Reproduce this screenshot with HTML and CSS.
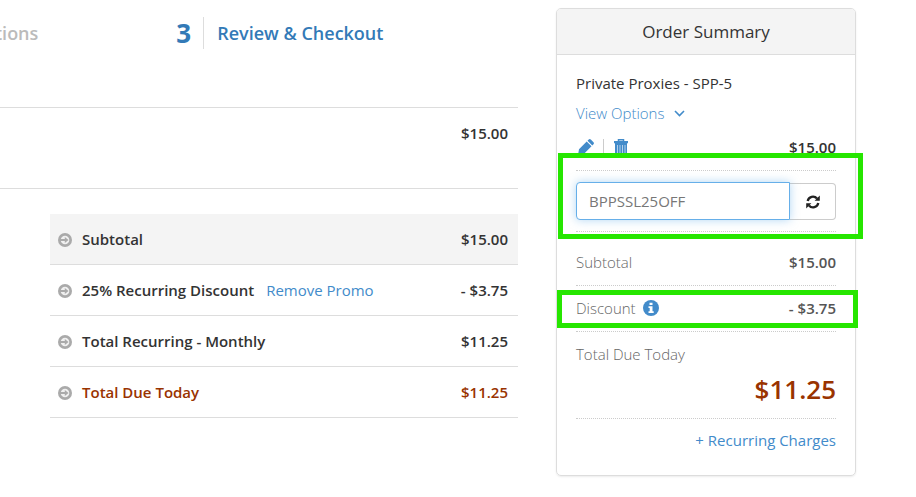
FILE: index.html
```html
<!DOCTYPE html>
<html lang="en">
<head>
<meta charset="utf-8">
<meta name="viewport" content="width=device-width, initial-scale=1">
<title>Review &amp; Checkout</title>
<link rel="stylesheet" href="styles.css">
</head>
<body>
<svg class="sprite" width="0" height="0" aria-hidden="true">
  <symbol id="arrow" viewBox="0 0 14 14">
    <circle cx="7" cy="7" r="7" fill="#aaa"/>
    <circle cx="7" cy="7" r="4.300" fill="#f0f0f0"/>
    <path d="M2 6h4.800V4l3.700 3-3.700 3V8H2z" fill="#aaa"/>
  </symbol>
</svg>
<div class="page">
  <main class="checkout">
    <header class="steps">
      <span class="step-title muted">tions</span>
      <div class="step">
        <span class="step-number">3</span>
        <h1 class="step-title">Review &amp; Checkout</h1>
      </div>
    </header>
    <div class="item">$15.00</div>
    <table class="totals">
      <tbody>
        <tr class="shaded">
          <th scope="row"><svg class="bullet"><use href="#arrow"/></svg>Subtotal</th>
          <td>$15.00</td>
        </tr>
        <tr>
          <th scope="row"><svg class="bullet"><use href="#arrow"/></svg>25% Recurring Discount<a class="remove" href="#">Remove Promo</a></th>
          <td>- $3.75</td>
        </tr>
        <tr>
          <th scope="row"><svg class="bullet"><use href="#arrow"/></svg>Total Recurring - Monthly</th>
          <td>$11.25</td>
        </tr>
        <tr class="due">
          <th scope="row"><svg class="bullet"><use href="#arrow"/></svg>Total Due Today</th>
          <td>$11.25</td>
        </tr>
      </tbody>
    </table>
  </main>

  <aside class="summary">
    <h2 class="summary-title">Order Summary</h2>
    <div class="summary-body">
      <section class="product">
        <div class="product-name">Private Proxies - SPP-5</div>
        <a class="options" href="#">View Options
          <svg width="11" height="7" viewBox="0 0 11 7"><path d="M1 1l4.500 4.500L10 1" fill="none" stroke="currentColor" stroke-width="1.600"/></svg>
        </a>
        <div class="line">
          <div class="actions">
            <button class="icon-button" type="button" aria-label="Edit">
              <svg width="16" height="16" viewBox="0 0 16 16" fill="currentColor"><path d="M0 16l1-5.800L8.700 2.500l4.800 4.800-7.700 7.700zM9.500 1.700L10.700.5q1-.9 2.100 0l2.700 2.700q.9 1 0 2.100L14.300 6.500z"/></svg>
            </button>
            <button class="icon-button" type="button" aria-label="Delete">
              <svg width="16" height="16" viewBox="0 0 16 16"><path d="M5.500 2.500V.8h5v1.700" fill="none" stroke="currentColor" stroke-width="1.500"/><path d="M1 2h14v2.200H1zM2 4h12v10.500q0 1.500-1.500 1.500h-9Q2 16 2 14.500z" fill="currentColor"/><path d="M4.500 6v8M7 6v8M9.500 6v8M12 6v8" stroke="#fff" stroke-opacity=".6"/></svg>
            </button>
          </div>
          <span class="amount dark">$15.00</span>
        </div>
      </section>
      <form class="promo">
        <input class="promo-input" type="text" aria-label="Promo code" value="BPPSSL25OFF">
        <button class="promo-button" type="button" aria-label="Update">
          <svg width="14" height="14" viewBox="0 0 14 14"><path d="M1.700 6A5.300 5.300 0 0 1 11 3.600M12.300 8A5.300 5.300 0 0 1 3 10.400" fill="none" stroke="#222" stroke-width="2.300"/><path d="M13.800.6v5.200H8.600zM.2 13.400V8.200h5.200z" fill="#222"/></svg>
        </button>
      </form>
      <div class="line row">
        <span>Subtotal</span>
        <span class="amount">$15.00</span>
      </div>
      <div class="line row discount">
        <span class="with-info">Discount
          <svg width="16" height="16" viewBox="0 0 16 16"><circle cx="8" cy="8" r="8" fill="#428bca"/><path d="M6.500 2.700h3v2.200h-3zM5.500 6.300h4v5h1.200V13H5.500v-1.700h1.200V8H5.500z" fill="#fff"/></svg>
        </span>
        <span class="amount">- $3.75</span>
      </div>
      <div class="total">
        <span>Total Due Today</span>
        <strong class="total-amount">$11.25</strong>
      </div>
      <a class="recurring" href="#">+ Recurring Charges</a>
    </div>
  </aside>
</div>
</body>
</html>
```
FILE: styles.css
```css
* {
  box-sizing: border-box;
}

body {
  margin: 0;
  background: #fff;
  color: #333;
  font: 400 15px/22px "Open Sans", sans-serif;
}

a {
  color: #428bca;
  text-decoration: none;
}

.sprite {
  position: absolute;
}

.page {
  display: flex;
  align-items: flex-start;
  gap: 38px;
  padding: 8px 60px 20px 0;
}

.checkout {
  flex: 1;
  min-width: 0;
}

.steps {
  display: flex;
  align-items: center;
  gap: 138px;
  margin-left: -5px;
  padding: 9px 0 58px;
  border-bottom: 1px solid #ddd;
}

.step {
  display: flex;
  align-items: center;
}

.step-number {
  padding-right: 12px;
  color: #337ab7;
  font-size: 26px;
  font-weight: 700;
  line-height: 32px;
}

.step-title {
  margin: 0;
  font-size: 18px;
  font-weight: 600;
  line-height: 32px;
}

.step .step-title {
  padding-left: 13px;
  border-left: 1px solid #ddd;
  color: #337ab7;
}

.step-title.muted {
  color: #bbb;
}

.item {
  padding: 14px 10px 44px;
  border-bottom: 1px solid #ddd;
  font-weight: 600;
  text-align: right;
}

.totals {
  width: calc(100% - 50px);
  margin: 25px 0 0 50px;
  border-collapse: separate;
  border-spacing: 0;
  font-weight: 600;
}

.totals th,
.totals td {
  padding: 14px 10px 14px 8px;
  border-bottom: 1px solid #ddd;
  font-weight: 600;
  text-align: left;
}

.totals td {
  text-align: right;
}

.shaded {
  background: #f4f4f4;
}

.due {
  color: #993300;
}

.bullet {
  width: 14px;
  height: 14px;
  margin-right: 10px;
  vertical-align: -2px;
}

.remove {
  margin-left: 12px;
  font-weight: 400;
}

.summary {
  flex: 0 0 300px;
  min-width: 0;
  border: 1px solid #ddd;
  border-radius: 5px;
  box-shadow: 0 1px 2px rgba(0, 0, 0, 0.08);
}

.summary-title {
  margin: 0;
  padding: 10px;
  border-bottom: 1px solid #ddd;
  border-radius: 4px 4px 0 0;
  background: #f4f4f4;
  font-size: 17px;
  font-weight: 400;
  line-height: 25px;
  text-align: center;
}

.summary-body {
  padding: 17px 19px 24px;
}

.product {
  display: flex;
  flex-direction: column;
  gap: 8px;
  padding-bottom: 12px;
  border-bottom: 1px dotted #ccc;
}

.options {
  display: flex;
  align-items: center;
  gap: 10px;
  font-weight: 300;
}

.line {
  display: flex;
  align-items: center;
  justify-content: space-between;
}

.product .line {
  padding-top: 4px;
}

.actions {
  display: flex;
}

.icon-button {
  display: flex;
  padding: 0 9px 0 2px;
  border: 0;
  background: none;
  color: #428bca;
}

.icon-button + .icon-button {
  padding-left: 9px;
  border-left: 1px solid #ccc;
}

.amount {
  color: #555;
  font-weight: 600;
}

.amount.dark {
  color: #333;
}

.promo {
  position: relative;
  display: flex;
  padding: 11px 0;
  border-bottom: 1px dotted #ccc;
}

.promo-input {
  position: relative;
  flex: 1;
  width: 0;
  min-width: 0;
  height: 38px;
  padding: 0 12px;
  border: 1px solid #66afe9;
  border-radius: 4px 0 0 4px;
  outline: 0;
  box-shadow: 0 0 10px rgba(102, 175, 233, 0.5);
  background: #fff;
  color: #777;
  font: inherit;
}

.promo-button {
  display: flex;
  align-items: center;
  justify-content: center;
  width: 46px;
  margin-top: 1px;
  border: 1px solid #ccc;
  border-left: 0;
  border-radius: 0 4px 4px 0;
  background: #fff;
}

.promo::after,
.discount::after {
  content: "";
  position: absolute;
  border: 5px solid #26e600;
  pointer-events: none;
}

.promo::after {
  inset: -18px -27px -8px -18px;
}

.row {
  padding: 19px 0 12px;
  border-bottom: 1px dotted #ccc;
  color: #666;
  font-weight: 300;
}

.discount {
  position: relative;
  padding: 11px 0 12px;
}

.discount::after {
  inset: 4px -22px 3px -19px;
}

.with-info {
  display: flex;
  align-items: center;
  gap: 7px;
}

.total {
  display: flex;
  flex-direction: column;
  padding: 11px 0 11px;
  border-bottom: 1px dotted #ccc;
  color: #666;
  font-weight: 300;
}

.total-amount {
  margin-top: 6px;
  color: #993300;
  font-size: 26px;
  font-weight: 600;
  line-height: 36px;
  text-align: right;
}

.recurring {
  display: block;
  padding-top: 10px;
  text-align: right;
}
```
